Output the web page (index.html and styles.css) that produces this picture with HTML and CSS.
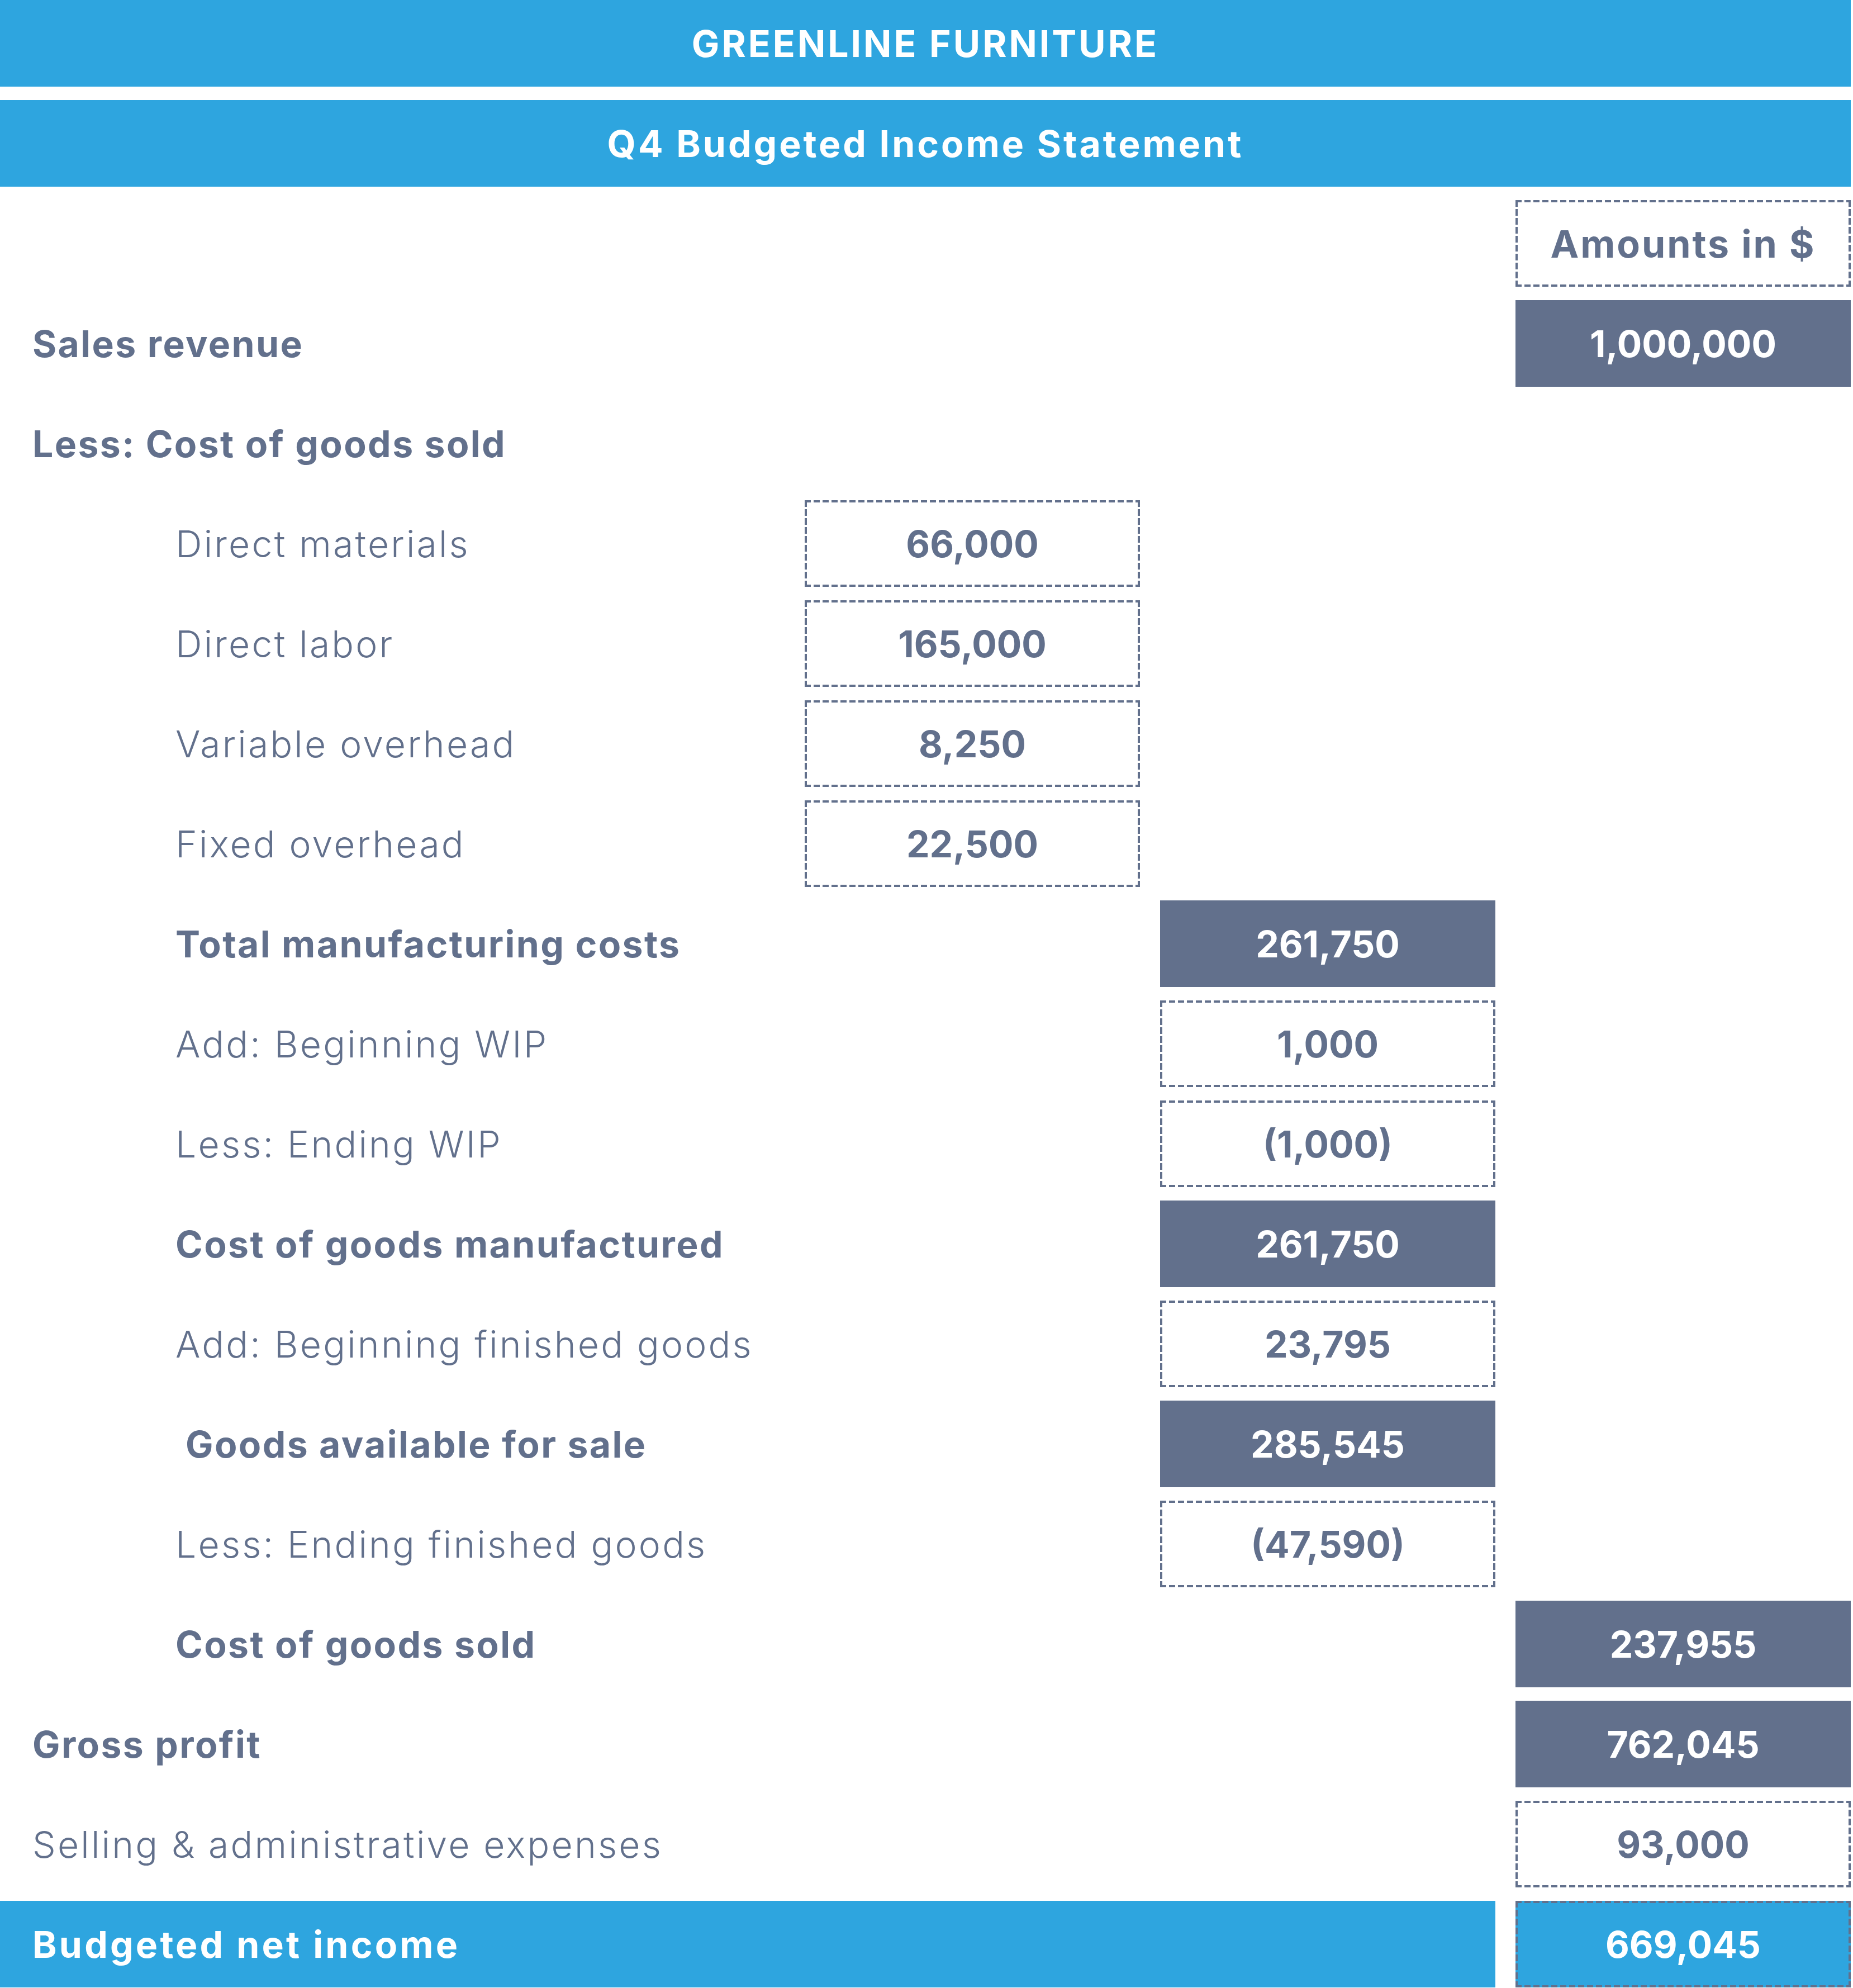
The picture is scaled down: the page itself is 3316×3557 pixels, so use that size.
FILE: index.html
```html
<!DOCTYPE html>
<html lang="en">
<head>
<meta charset="utf-8">
<title>Greenline Furniture – Q4 Budgeted Income Statement</title>
<link rel="stylesheet" href="styles.css">
</head>
<body>
<div class="sheet">
  <div class="banner banner-caps">GREENLINE FURNITURE</div>
  <div class="banner">Q4 Budgeted Income Statement</div>

  <div class="row">
    <div class="label"></div><div></div><div></div>
    <div class="cell dashed heading">Amounts in $</div>
  </div>
  <div class="row">
    <div class="label strong">Sales revenue</div><div></div><div></div>
    <div class="cell solid">1,000,000</div>
  </div>
  <div class="row">
    <div class="label strong">Less: Cost of goods sold</div><div></div><div></div><div></div>
  </div>
  <div class="row">
    <div class="label light indent">Direct materials</div>
    <div class="cell dashed">66,000</div><div></div><div></div>
  </div>
  <div class="row">
    <div class="label light indent">Direct labor</div>
    <div class="cell dashed">165,000</div><div></div><div></div>
  </div>
  <div class="row">
    <div class="label light indent">Variable overhead</div>
    <div class="cell dashed">8,250</div><div></div><div></div>
  </div>
  <div class="row">
    <div class="label light indent">Fixed overhead</div>
    <div class="cell dashed">22,500</div><div></div><div></div>
  </div>
  <div class="row">
    <div class="label strong indent">Total manufacturing costs</div><div></div>
    <div class="cell solid">261,750</div><div></div>
  </div>
  <div class="row">
    <div class="label light indent">Add: Beginning WIP</div><div></div>
    <div class="cell dashed">1,000</div><div></div>
  </div>
  <div class="row">
    <div class="label light indent">Less: Ending WIP</div><div></div>
    <div class="cell dashed">(1,000)</div><div></div>
  </div>
  <div class="row">
    <div class="label strong indent">Cost of goods manufactured</div><div></div>
    <div class="cell solid">261,750</div><div></div>
  </div>
  <div class="row">
    <div class="label light indent">Add: Beginning finished goods</div><div></div>
    <div class="cell dashed">23,795</div><div></div>
  </div>
  <div class="row">
    <div class="label strong indent indent-more">Goods available for sale</div><div></div>
    <div class="cell solid">285,545</div><div></div>
  </div>
  <div class="row">
    <div class="label light indent">Less: Ending finished goods</div><div></div>
    <div class="cell dashed">(47,590)</div><div></div>
  </div>
  <div class="row">
    <div class="label strong indent">Cost of goods sold</div><div></div><div></div>
    <div class="cell solid">237,955</div>
  </div>
  <div class="row">
    <div class="label strong">Gross profit</div><div></div><div></div>
    <div class="cell solid">762,045</div>
  </div>
  <div class="row">
    <div class="label light">Selling &amp; administrative expenses</div><div></div><div></div>
    <div class="cell dashed">93,000</div>
  </div>
  <div class="row">
    <div class="label strong total-band">Budgeted net income</div>
    <div class="cell dashed total">669,045</div>
  </div>
</div>
</body>
</html>
```

FILE: styles.css
```css
html, body {
  margin: 0;
  padding: 0;
  background: #ffffff;
}

body {
  font-family: "Inter", "Noto Sans", "DejaVu Sans", sans-serif;
  color: #62708c;
}

.sheet {
  width: 3312px;
  display: flex;
  flex-direction: column;
  gap: 24px;
}

.banner {
  height: 155px;
  background: #2ea5df;
  color: #ffffff;
  display: flex;
  align-items: center;
  justify-content: center;
  font-size: 66px;
  font-weight: 700;
  letter-spacing: 4px;
}

.row {
  height: 155px;
  display: grid;
  grid-template-columns: 1404px 600px 600px 600px;
  column-gap: 36px;
}

.label {
  display: flex;
  align-items: center;
  padding-left: 58px;
  font-size: 66px;
  white-space: nowrap;
}

.label.strong {
  font-weight: 700;
  letter-spacing: 2.4px;
}

.label.light {
  font-weight: 300;
  letter-spacing: 3.2px;
}

.label.indent {
  padding-left: 314px;
}

.label.indent-more {
  padding-left: 332px;
}

.cell {
  box-sizing: border-box;
  display: flex;
  align-items: center;
  justify-content: center;
  font-size: 66px;
  font-weight: 700;
}

.cell.heading {
  font-size: 68px;
  letter-spacing: 3px;
}

.cell.dashed {
  background-color: #ffffff;
  background-image:
    repeating-linear-gradient(90deg, #62708c 0 11px, transparent 11px 16px),
    repeating-linear-gradient(90deg, #62708c 0 11px, transparent 11px 16px),
    repeating-linear-gradient(180deg, #62708c 0 12px, transparent 12px 16px),
    repeating-linear-gradient(180deg, #62708c 0 12px, transparent 12px 16px);
  background-size: 100% 4px, 100% 4px, 4px 100%, 4px 100%;
  background-position: left top, left bottom, left top, right top;
  background-repeat: no-repeat;
}

.cell.solid {
  background: #62708c;
  color: #ffffff;
}

.row .total-band {
  grid-column: 1 / 4;
  background: #2ea5df;
  color: #ffffff;
  letter-spacing: 4.2px;
}

.cell.dashed.total {
  background-color: #2ea5df;
  color: #ffffff;
}
```
